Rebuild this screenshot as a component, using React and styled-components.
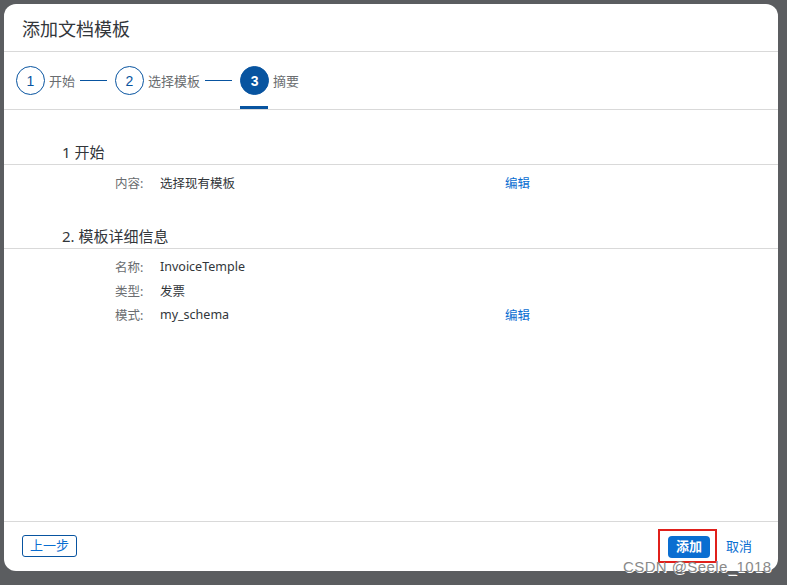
import styled, { createGlobalStyle } from "styled-components"

const GlobalStyle = createGlobalStyle`
    html, body {
        margin: 0;
        padding: 0;
        background: #5b5d60;
        font-family: "Noto Sans", "Noto Sans CJK SC", sans-serif;
    }
`;

const steps = [
    { n: 1, label: "开始" },
    { n: 2, label: "选择模板" },
    { n: 3, label: "摘要", active: true },
];

const sections = [
    {
        title: "1 开始",
        rows: [{ label: "内容:", value: "选择现有模板", edit: true }],
    },
    {
        title: "2. 模板详细信息",
        rows: [
            { label: "名称:", value: "InvoiceTemple" },
            { label: "类型:", value: "发票" },
            { label: "模式:", value: "my_schema", edit: true },
        ],
    },
];

function App() {
    return (
        <Page>
            <GlobalStyle />
            <Dialog>
                <Header>添加文档模板</Header>
                <Steps>
                    {steps.map((s, i) => (
                        <Step key={s.n}>
                            <StepItem active={s.active}>
                                <Circle active={s.active}>{s.n}</Circle>
                                <StepLabel>{s.label}</StepLabel>
                            </StepItem>
                            {i < steps.length - 1 && <Connector />}
                        </Step>
                    ))}
                </Steps>
                <Content>
                    {sections.map((sec) => (
                        <Section key={sec.title}>
                            <SectionTitle>{sec.title}</SectionTitle>
                            <Rows>
                                {sec.rows.map((r) => (
                                    <Row key={r.label}>
                                        <Label>{r.label}</Label>
                                        <Value>{r.value}</Value>
                                        {r.edit && <EditLink>编辑</EditLink>}
                                    </Row>
                                ))}
                            </Rows>
                        </Section>
                    ))}
                </Content>
                <Footer>
                    <GhostButton>上一步</GhostButton>
                    <Actions>
                        <Highlight>
                            <PrimaryButton>添加</PrimaryButton>
                        </Highlight>
                        <TextButton>取消</TextButton>
                    </Actions>
                </Footer>
            </Dialog>
            <Watermark>CSDN @Seele_1018</Watermark>
        </Page>
    )
}

const Page = styled.div`
    position: relative;
    width: 787px;
    height: 585px;
    padding: 4px 0 0 4px;
    box-sizing: border-box;
`;

const Dialog = styled.div`
    width: 774px;
    height: 567px;
    background: #fff;
    border-radius: 12px;
    display: flex;
    flex-direction: column;
    overflow: hidden;
`;

const Header = styled.div`
    height: 47px;
    border-bottom: 1px solid #d9d9d9;
    padding-left: 18px;
    display: flex;
    align-items: center;
    font-size: 18px;
    color: #32363a;
    flex-shrink: 0;
`;

const Steps = styled.div`
    height: 57px;
    border-bottom: 1px solid #d9d9d9;
    display: flex;
    align-items: stretch;
    padding-left: 12px;
    flex-shrink: 0;
`;

const Step = styled.div`
    display: flex;
    align-items: center;
`;

const StepItem = styled.div`
    height: 100%;
    display: flex;
    align-items: center;
    position: relative;
    &::after {
        content: "";
        display: ${(p) => (p.active ? "block" : "none")};
        position: absolute;
        left: 0;
        bottom: 0;
        width: 28px;
        height: 3px;
        background: #0854a0;
    }
`;

const Circle = styled.div`
    width: 27px;
    height: 27px;
    border-radius: 50%;
    border: 1px solid #0854a0;
    background: ${(p) => (p.active ? "#0854a0" : "#fff")};
    color: ${(p) => (p.active ? "#fff" : "#0854a0")};
    font-family: "Liberation Sans", sans-serif;
    font-weight: ${(p) => (p.active ? 700 : 400)};
    font-size: 14px;
    display: flex;
    align-items: center;
    justify-content: center;
`;

const StepLabel = styled.span`
    margin-left: 4px;
    font-size: 13px;
    color: #6a6d70;
`;

const Connector = styled.div`
    width: 27px;
    height: 1px;
    background: #0854a0;
    margin: 0 8px 0 5px;
`;

const Content = styled.div`
    flex: 1;
    padding-top: 30px;
`;

const Section = styled.div`
    margin-bottom: 30px;
`;

const SectionTitle = styled.div`
    padding-left: 58px;
    height: 24px;
    line-height: 24px;
    font-size: 15px;
    color: #32363a;
    border-bottom: 1px solid #d9d9d9;
`;

const Rows = styled.div`
    padding-top: 5px;
`;

const Row = styled.div`
    display: flex;
    align-items: center;
    height: 24px;
    padding-left: 111px;
    font-size: 12.5px;
`;

const Label = styled.span`
    width: 45px;
    color: #6a6d70;
`;

const Value = styled.span`
    width: 345px;
    color: #32363a;
`;

const EditLink = styled.span`
    color: #0a6ed1;
`;

const Footer = styled.div`
    height: 50px;
    border-top: 1px solid #d9d9d9;
    display: flex;
    align-items: center;
    justify-content: space-between;
    padding: 0 26px 2px 18px;
    box-sizing: border-box;
    flex-shrink: 0;
`;

const GhostButton = styled.button`
    height: 22px;
    padding: 0 7px;
    border: 1px solid #0854a0;
    border-radius: 3px;
    background: #fff;
    color: #0a6ed1;
    font-family: inherit;
    font-size: 13px;
    line-height: 1;
`;

const Actions = styled.div`
    display: flex;
    align-items: center;
    gap: 9px;
`;

const Highlight = styled.div`
    border: 2px solid #e0201b;
    padding: 5px 5px 3px 8px;
    display: flex;
`;

const PrimaryButton = styled.button`
    height: 22px;
    padding: 0 8px;
    border: none;
    border-radius: 4px;
    background: #0a6ed1;
    color: #fff;
    font-family: inherit;
    font-size: 13px;
    font-weight: 700;
    line-height: 1;
`;

const TextButton = styled.span`
    color: #0a6ed1;
    font-size: 13px;
`;

const Watermark = styled.div`
    position: absolute;
    left: 623px;
    top: 558px;
    font-family: "Liberation Sans", sans-serif;
    font-size: 15px;
    color: #8a8a8a;
    text-shadow: 1px 1px 0 #fff;
    letter-spacing: 0.4px;
`;

export default App
